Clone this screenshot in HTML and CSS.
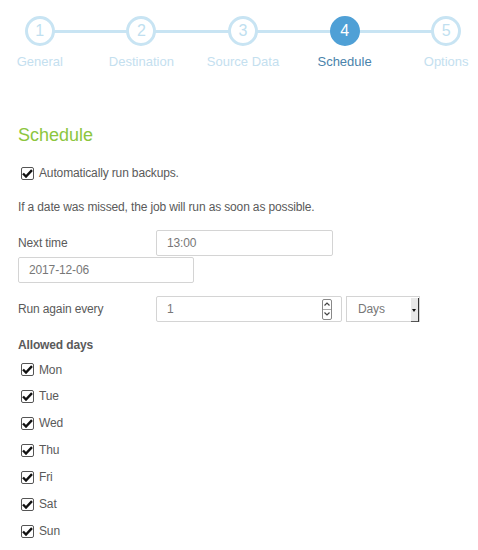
FILE: index.html
```html
<!DOCTYPE html>
<html lang="en">
<head>
    <meta charset="UTF-8">
    <title>Backup job - Schedule</title>
    <link rel="stylesheet" href="styles.css">
</head>
<body>
    <!-- Wizard steps -->
    <div class="steps">
        <div class="step"><span class="dot">1</span><span class="step-label">General</span></div>
        <div class="step"><span class="dot">2</span><span class="step-label">Destination</span></div>
        <div class="step"><span class="dot">3</span><span class="step-label">Source Data</span></div>
        <div class="step active"><span class="dot">4</span><span class="step-label">Schedule</span></div>
        <div class="step"><span class="dot">5</span><span class="step-label">Options</span></div>
    </div>

    <div class="page">
        <h2 class="title">Schedule</h2>

        <label class="check first">
            <span class="box"><svg width="11" height="9" viewBox="0 0 11 9"><path d="M1 4.5 L4 7.5 L10 1.2" fill="none" stroke="#111" stroke-width="2.4"/></svg></span>
            Automatically run backups.
        </label>

        <p class="note">If a date was missed, the job will run as soon as possible.</p>

        <div class="row">
            <span class="row-label">Next time</span>
            <div class="field">13:00</div>
        </div>
        <div class="field date">2017-12-06</div>

        <div class="row repeat">
            <span class="row-label">Run again every</span>
            <div class="field number">
                1
                <span class="spin">
                    <span class="spin-btn"><svg width="6" height="4" viewBox="0 0 6 4"><path d="M0.5 3.5 L3 1 L5.5 3.5" fill="none" stroke="#444" stroke-width="1.2"/></svg></span>
                    <span class="spin-btn"><svg width="6" height="4" viewBox="0 0 6 4"><path d="M0.5 0.5 L3 3 L5.5 0.5" fill="none" stroke="#444" stroke-width="1.2"/></svg></span>
                </span>
            </div>
            <div class="select">
                Days
                <span class="select-arrow"><span class="tri"></span></span>
            </div>
        </div>

        <div class="days-title">Allowed days</div>
        <div class="days">
            <label class="check"><span class="box"><svg width="11" height="9" viewBox="0 0 11 9"><path d="M1 4.5 L4 7.5 L10 1.2" fill="none" stroke="#111" stroke-width="2.4"/></svg></span>Mon</label>
            <label class="check"><span class="box"><svg width="11" height="9" viewBox="0 0 11 9"><path d="M1 4.5 L4 7.5 L10 1.2" fill="none" stroke="#111" stroke-width="2.4"/></svg></span>Tue</label>
            <label class="check"><span class="box"><svg width="11" height="9" viewBox="0 0 11 9"><path d="M1 4.5 L4 7.5 L10 1.2" fill="none" stroke="#111" stroke-width="2.4"/></svg></span>Wed</label>
            <label class="check"><span class="box"><svg width="11" height="9" viewBox="0 0 11 9"><path d="M1 4.5 L4 7.5 L10 1.2" fill="none" stroke="#111" stroke-width="2.4"/></svg></span>Thu</label>
            <label class="check"><span class="box"><svg width="11" height="9" viewBox="0 0 11 9"><path d="M1 4.5 L4 7.5 L10 1.2" fill="none" stroke="#111" stroke-width="2.4"/></svg></span>Fri</label>
            <label class="check"><span class="box"><svg width="11" height="9" viewBox="0 0 11 9"><path d="M1 4.5 L4 7.5 L10 1.2" fill="none" stroke="#111" stroke-width="2.4"/></svg></span>Sat</label>
            <label class="check"><span class="box"><svg width="11" height="9" viewBox="0 0 11 9"><path d="M1 4.5 L4 7.5 L10 1.2" fill="none" stroke="#111" stroke-width="2.4"/></svg></span>Sun</label>
        </div>
    </div>
</body>
</html>
```

FILE: styles.css
```css
body {
    margin: 0;
    background: #fff;
    font-family: 'Liberation Sans', Arial, sans-serif;
    font-size: 12px;
    letter-spacing: -0.14px;
    color: #5a5a5a;
    overflow: hidden;
}

/* wizard steps */
.steps {
    display: flex;
    width: 508px;
    margin-left: -11px;
    padding-top: 16px;
    letter-spacing: 0;
}

.step {
    flex: 1;
    display: flex;
    flex-direction: column;
    align-items: center;
    position: relative;
}

.step + .step::before {
    content: "";
    position: absolute;
    top: 14px;
    right: 50%;
    width: 100%;
    height: 3px;
    background: #c8e4f3;
}

.dot {
    position: relative;
    z-index: 1;
    box-sizing: border-box;
    width: 30px;
    height: 30px;
    border: 3px solid #c8e4f3;
    border-radius: 50%;
    background: #fff;
    color: #c0dff0;
    font-size: 16px;
    line-height: 24px;
    text-align: center;
}

.step-label {
    margin-top: 8px;
    font-size: 13px;
    line-height: 16px;
    color: #c4e0ef;
}

.step.active .dot {
    background: #4fa0d6;
    border-color: #4fa0d6;
    color: #fff;
}

.step.active .step-label {
    color: #4a83ab;
}

/* form */
.page {
    padding: 0 18px;
}

.title {
    margin: 54px 0 0;
    font-size: 18px;
    line-height: 22px;
    font-weight: normal;
    letter-spacing: 0;
    color: #8cc63e;
}

.check {
    display: flex;
    align-items: center;
    line-height: 26.9px;
    height: 26.9px;
    padding-left: 3px;
}

.check.first {
    margin-top: 17px;
    line-height: 20px;
    height: 20px;
}

.box {
    box-sizing: border-box;
    width: 13px;
    height: 13px;
    border: 1px solid #555;
    border-radius: 2px;
    background: #fff;
    margin-right: 5px;
    display: flex;
    align-items: center;
    justify-content: center;
}

.note {
    margin: 14px 0 0;
    line-height: 20px;
}

.row {
    display: flex;
    align-items: center;
    margin-top: 13px;
}

.row-label {
    width: 138px;
}

.field {
    box-sizing: border-box;
    width: 177px;
    height: 26px;
    border: 1px solid #d4d4d4;
    border-radius: 2px;
    padding-left: 10px;
    line-height: 24px;
    color: #777;
    background: #fff;
}

.date {
    width: 176px;
    margin-top: 1px;
}

.repeat {
    margin-top: 13px;
}

.number {
    width: 186px;
    display: flex;
    align-items: center;
    justify-content: space-between;
    padding-right: 9px;
}

.spin {
    display: flex;
    flex-direction: column;
    border: 1px solid #888;
    border-radius: 2px;
    width: 8px;
}

.spin-btn {
    height: 9px;
    display: flex;
    align-items: center;
    justify-content: center;
}

.spin-btn + .spin-btn {
    border-top: 1px solid #aaa;
}

.select {
    box-sizing: border-box;
    width: 74px;
    height: 26px;
    margin-left: 4px;
    border: 1px solid #d4d4d4;
    padding-left: 11px;
    line-height: 24px;
    color: #777;
    position: relative;
}

.select-arrow {
    position: absolute;
    top: 1px;
    right: 0;
    width: 8px;
    height: 24px;
    background: #e8e8e8;
    border-right: 1px solid #333;
    border-bottom: 1px solid #555;
    box-sizing: border-box;
}

.tri {
    position: absolute;
    top: 11px;
    left: 1px;
    border-left: 2.5px solid transparent;
    border-right: 2.5px solid transparent;
    border-top: 3px solid #111;
}

.days-title {
    margin-top: 14px;
    line-height: 18px;
    font-weight: bold;
}

.days {
    margin-top: 2.5px;
}
```
